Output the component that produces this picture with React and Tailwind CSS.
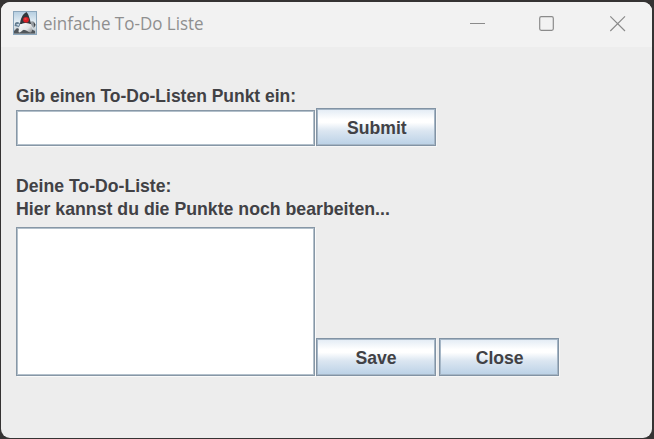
const label =
  "block w-max whitespace-nowrap font-['Liberation_Sans',Arial,sans-serif] text-[18.5px] leading-[23px] font-bold text-[#414145]";

const field =
  "block w-[299px] resize-none border border-[#8797a6] bg-white shadow-[inset_1px_1px_0_#b3c0cb,inset_-1px_-1px_0_#b3c0cb,1px_1px_0_#fafafa] outline-none";

function JavaIcon() {
  return (
    <svg width="24" height="24" viewBox="0 0 24 24" className="shrink-0">
      <defs>
        <linearGradient id="sky" x1="0" y1="0" x2="0" y2="1">
          <stop offset="0" stopColor="#b4cde0" />
          <stop offset="0.55" stopColor="#edf4f8" />
          <stop offset="1" stopColor="#a3aeb6" />
        </linearGradient>
        <linearGradient id="belly" x1="0" y1="0" x2="1" y2="1">
          <stop offset="0" stopColor="#ffffff" />
          <stop offset="0.65" stopColor="#e2e3e4" />
          <stop offset="1" stopColor="#85888b" />
        </linearGradient>
      </defs>
      <rect x="0.5" y="0.5" width="23" height="23" fill="url(#sky)" stroke="#8ba6bc" />
      <path d="M1 20 L4 17 L8 19 L18 18 L22 20 V22.5 H1Z" fill="#50565b" />
      <path d="M2 12 C4 10 6 11 7.5 13 L6 16 L1.5 15Z" fill="#647e92" />
      <path d="M17 11 C20 9 22.5 11 22.5 15 L20.5 17 L18 14Z" fill="#989da2" />
      <path d="M20.5 11 L22.5 13.5 L21.5 16.5Z" fill="#3b4045" />
      <path d="M8 12 C10 10 16 10 17.5 12 C19 16 20 20 18 21.5 C15 22 13 18 10 19 C8 21 6.5 22 5.5 21 C5.5 18 7 15 8 12Z" fill="url(#belly)" />
      <path d="M13.5 1 C9.5 3 7.5 8 7 13 C9 13.5 10 11.5 13 12 C15 12.3 17 13 18 13 C17 8 15.5 3 13.5 1Z" fill="#32383d" />
      <ellipse cx="13" cy="8.8" rx="2.9" ry="2.8" fill="#d91f25" />
      <ellipse cx="12.5" cy="8" rx="1.4" ry="0.8" fill="#f0524f" />
      <path d="M3 13.5 L6.5 12.5 L5.5 15Z" fill="#cfdfec" />
    </svg>
  );
}

function Button({ children }) {
  return (
    <button className="flex h-[38px] w-[120px] items-center justify-center border border-[#8293a4] bg-[linear-gradient(180deg,#dfe9f3_0%,#ffffff_30%,#ffffff_38%,#dbe6f1_60%,#b8cfe5_100%)] bg-origin-border shadow-[inset_0_0_0_1px_#a5b6c6,1px_1px_0_#f6f6f6]">
      <span className={`${label} translate-x-[0.5px] scale-x-[0.95]`}>{children}</span>
    </button>
  );
}

export default function App() {
  return (
    <div className="h-[439px] w-[654px] overflow-hidden bg-[#353333] pt-[2px] pl-px">
      <div className="h-[436px] w-[651px] overflow-hidden rounded-[9px] bg-[#ededed]">
        <header className="flex h-[45px] items-start bg-[#f2f2f2] pt-[9px] pl-3">
          <JavaIcon />
          <h1 className="ml-[6px] w-max origin-left scale-x-[0.97] whitespace-nowrap font-['Open_Sans','Noto_Sans',sans-serif] text-[17.5px] leading-6 font-normal text-[#8f8f8f]">
            einfache To-Do Liste
          </h1>
          <svg className="mt-[3px] mr-[26px] ml-auto shrink-0" width="158" height="18" viewBox="0 0 158 18" fill="none" stroke="#8b8b8b" strokeWidth="1.2">
            <path d="M2 9.5H17" strokeWidth="1" />
            <rect x="71.7" y="2.7" width="13.6" height="13.6" rx="1.5" />
            <path d="M142.3 2.3L157 17M157 2.3L142.3 17" />
          </svg>
        </header>
        <main className="pt-[37px] pl-[15px]">
          <label className={`${label} origin-left scale-x-[0.944]`}>Gib einen To-Do-Listen Punkt ein:</label>
          <div className="mt-px flex items-end gap-px">
            <input className={`${field} h-9`} />
            <Button>Submit</Button>
          </div>
          <div className="mt-[28px]">
            <p className={`${label} origin-left scale-x-[0.953]`}>Deine To-Do-Liste:</p>
            <p className={`${label} origin-left scale-x-[0.957]`}>Hier kannst du die Punkte noch bearbeiten...</p>
          </div>
          <div className="mt-[7px] flex items-end gap-px">
            <textarea className={`${field} h-[149px]`} />
            <div className="flex gap-[3px]">
              <Button>Save</Button>
              <Button>Close</Button>
            </div>
          </div>
        </main>
      </div>
    </div>
  );
}
